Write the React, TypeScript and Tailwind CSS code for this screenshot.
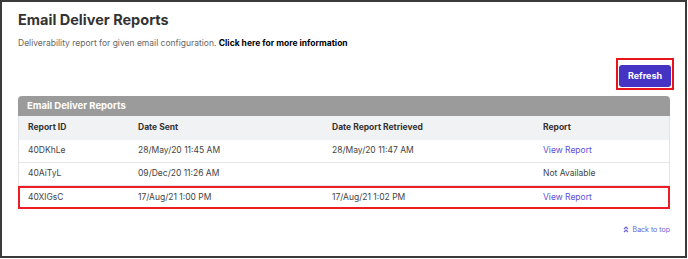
import React from 'react';

type Row = {
  id: string;
  sent: string;
  retrieved: string;
  report: string | null;
  highlighted?: boolean;
};

const rows: Row[] = [
  { id: '40DKhLe', sent: '28/May/20 11:45 AM', retrieved: '28/May/20 11:47 AM', report: 'View Report' },
  { id: '40AiTyL', sent: '09/Dec/20 11:26 AM', retrieved: '', report: null },
  { id: '40XlGsC', sent: '17/Aug/21 1:00 PM', retrieved: '17/Aug/21 1:02 PM', report: 'View Report', highlighted: true },
];

const ChevronsUp: React.FC = () => (
  <svg width="6" height="7" viewBox="0 0 6 7" fill="none" stroke="currentColor" strokeWidth="1.2">
    <path d="M1 3 3 1 5 3" />
    <path d="M1 6 3 4 5 6" />
  </svg>
);

export default function App() {
  return (
    <div className="w-[688px] h-[259px] bg-white font-['Inter',sans-serif]">
      <div className="w-[687px] h-[258px] border-2 border-[#3a3a3a] pl-4 pr-[15px] pt-[8px] flex flex-col">
        <h1 className="text-[14.5px] leading-[20px] font-bold text-[#333]">Email Deliver Reports</h1>
        <p className="mt-[7px] text-[8.5px] leading-[12px] text-[#666]">
          Deliverability report for given email configuration.{' '}
          <span className="font-bold text-black">Click here for more information</span>
        </p>

        <div className="flex justify-end mt-[9px] mr-[-4px]">
          <div className="border-2 border-[#e8141c] p-px">
            <button className="w-[52px] h-[22px] rounded-[3px] bg-[#4534c4] text-white text-[9px] font-bold">
              Refresh
            </button>
          </div>
        </div>

        <div className="mt-[6px] rounded-t-[4px] overflow-hidden">
          <div className="h-[20px] bg-[#9b9b9b] px-[9px] flex items-center text-white text-[9.5px] font-bold">
            Email Deliver Reports
          </div>
          <div className="grid grid-cols-[110px_194px_211px_1fr] h-[24px] items-center bg-[#f1f2f4] px-[9px] text-[8.5px] font-bold text-[#333] border-x border-[#e4e4e4]">
            <span>Report ID</span>
            <span>Date Sent</span>
            <span>Date Report Retrieved</span>
            <span>Report</span>
          </div>
          {rows.map((r) => (
            <div
              key={r.id}
              className={
                r.highlighted
                  ? 'grid grid-cols-[110px_194px_211px_1fr] h-[23px] items-center px-[8px] text-[8.5px] text-[#444] border-2 border-[#ee1c25]'
                  : 'grid grid-cols-[110px_194px_211px_1fr] h-[23px] items-center px-[9px] text-[8.5px] text-[#444] border-x border-b border-[#e4e4e4]'
              }
            >
              <span>{r.id}</span>
              <span>{r.sent}</span>
              <span>{r.retrieved}</span>
              {r.report ? (
                <span className="text-[#5b4fd6]">{r.report}</span>
              ) : (
                <span>Not Available</span>
              )}
            </div>
          ))}
        </div>

        <div className="flex justify-end mt-[16px]">
          <a className="flex items-center gap-[4px] text-[7px] leading-[10px] text-[#6a62d9]">
            <ChevronsUp />
            Back to top
          </a>
        </div>
      </div>
    </div>
  );
}
